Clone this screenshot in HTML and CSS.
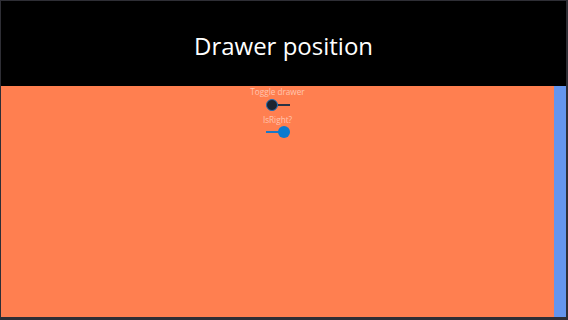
FILE: index.html
```html
<!DOCTYPE html>
<html>
<head>
<meta charset="utf-8">
<link rel="stylesheet" href="styles.css">
</head>
<body>
<div class="window">
  <header class="header">Drawer position</header>
  <div class="content">
    <main class="main">
      <div class="label">Toggle drawer</div>
      <div class="toggle off"><span class="track"></span><span class="knob"></span></div>
      <div class="label second">IsRight?</div>
      <div class="toggle on"><span class="track"></span><span class="knob"></span></div>
    </main>
    <aside class="drawer"></aside>
  </div>
</div>
</body>
</html>
```

FILE: styles.css
```css
html, body {
  margin: 0;
  padding: 0;
  width: 568px;
  height: 320px;
  overflow: hidden;
  background: #2e2e35;
}
.window {
  box-sizing: border-box;
  width: 568px;
  height: 320px;
  padding: 1px 2px 3px 1px;
  display: flex;
  flex-direction: column;
  font-family: "Open Sans", "Noto Sans", sans-serif;
}
.header {
  height: 85px;
  flex: none;
  background: #000;
  color: #fff;
  font-size: 24px;
  display: flex;
  align-items: center;
  justify-content: center;
  padding-top: 4px;
  box-sizing: border-box;
}
.content {
  flex: 1;
  display: flex;
}
.main {
  flex: 1;
  background: #ff7f50;
  display: flex;
  flex-direction: column;
  align-items: center;
}
.drawer {
  width: 12px;
  background: #6495ed;
}
.label {
  font-size: 8.2px;
  line-height: 12px;
  color: rgba(255, 255, 255, 0.55);
}
.label.second {
  margin-top: 3px;
}
.toggle {
  position: relative;
  width: 24px;
  height: 12px;
}
.toggle.off {
  margin-top: 1px;
}
.track {
  position: absolute;
  top: 5px;
  height: 2px;
  width: 14px;
}
.knob {
  position: absolute;
  top: 0;
  width: 12px;
  height: 12px;
  border-radius: 50%;
  box-sizing: border-box;
}
.off .track { left: 10px; background: #2a3344; }
.off .knob { left: 0; background: #1d2430; border: 1px solid #1e6fb8; }
.on .track { left: 0; background: #1a78c8; }
.on .knob { left: 12px; background: #0a7ad0; }
```
